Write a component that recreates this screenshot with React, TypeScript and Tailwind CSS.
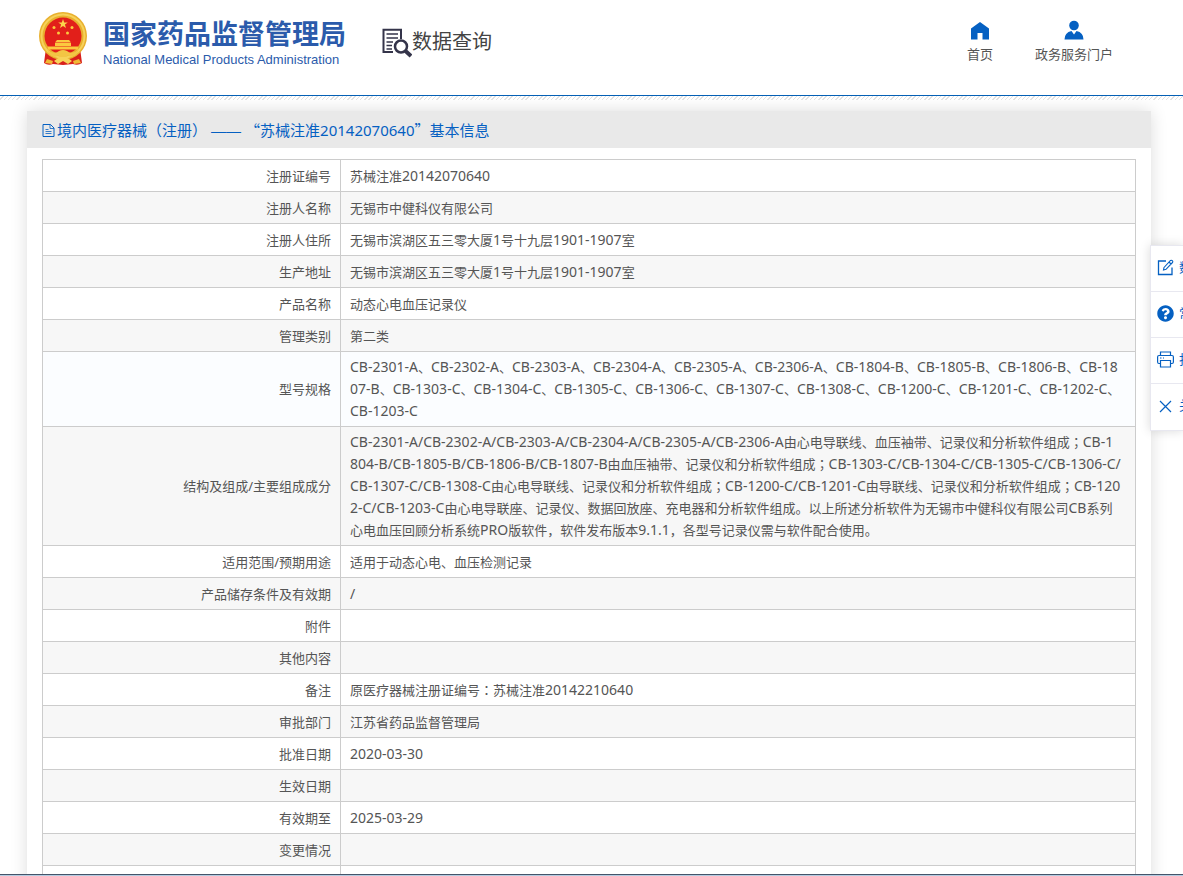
import React from "react";
import { FaQuestionCircle } from "react-icons/fa";

const rows = [
  { label: "注册证编号", value: ["苏械注准20142070640"] },
  { label: "注册人名称", value: ["无锡市中健科仪有限公司"] },
  { label: "注册人住所", value: ["无锡市滨湖区五三零大厦1号十九层1901-1907室"] },
  { label: "生产地址", value: ["无锡市滨湖区五三零大厦1号十九层1901-1907室"] },
  { label: "产品名称", value: ["动态心电血压记录仪"] },
  { label: "管理类别", value: ["第二类"] },
  {
    label: "型号规格",
    active: true,
    value: [
      "CB-2301-A、CB-2302-A、CB-2303-A、CB-2304-A、CB-2305-A、CB-2306-A、CB-1804-B、CB-1805-B、CB-1806-B、CB-18",
      "07-B、CB-1303-C、CB-1304-C、CB-1305-C、CB-1306-C、CB-1307-C、CB-1308-C、CB-1200-C、CB-1201-C、CB-1202-C、",
      "CB-1203-C",
    ],
  },
  {
    label: "结构及组成/主要组成成分",
    value: [
      "CB-2301-A/CB-2302-A/CB-2303-A/CB-2304-A/CB-2305-A/CB-2306-A由心电导联线、血压袖带、记录仪和分析软件组成；CB-1",
      "804-B/CB-1805-B/CB-1806-B/CB-1807-B由血压袖带、记录仪和分析软件组成；CB-1303-C/CB-1304-C/CB-1305-C/CB-1306-C/",
      "CB-1307-C/CB-1308-C由心电导联线、记录仪和分析软件组成；CB-1200-C/CB-1201-C由导联线、记录仪和分析软件组成；CB-120",
      "2-C/CB-1203-C由心电导联座、记录仪、数据回放座、充电器和分析软件组成。以上所述分析软件为无锡市中健科仪有限公司CB系列",
      "心电血压回顾分析系统PRO版软件，软件发布版本9.1.1，各型号记录仪需与软件配合使用。",
    ],
  },
  { label: "适用范围/预期用途", value: ["适用于动态心电、血压检测记录"] },
  { label: "产品储存条件及有效期", value: ["/"] },
  { label: "附件", value: [] },
  { label: "其他内容", value: [] },
  { label: "备注", value: ["原医疗器械注册证编号：苏械注准20142210640"] },
  { label: "审批部门", value: ["江苏省药品监督管理局"] },
  { label: "批准日期", value: ["2020-03-30"] },
  { label: "生效日期", value: [] },
  { label: "有效期至", value: ["2025-03-29"] },
  { label: "变更情况", value: [] },
  { label: "", value: [] },
];

// Latin runs are set a step larger than the Chinese, and ；： are centred in their cell
function MixedText({ text }: { text: string }) {
  return (
    <>
      {text.split(/([\x20-\x7e]+|[；：])/).map((part, i) => {
        if (/^[\x20-\x7e]/.test(part)) {
          return <span key={i} className="text-[14px]">{part}</span>;
        }
        if (/^[；：]/.test(part)) {
          return <span key={i} className="font-['Noto_Sans_CJK_TC',sans-serif]">{part}</span>;
        }
        return part;
      })}
    </>
  );
}

function Emblem() {
  return (
    <svg viewBox="0 0 48 54" className="h-[54px] w-12 shrink-0" aria-hidden="true">
      <path d="M7 36L5 51Q9 54 14 52L24 53L34 52Q39 54 43 51L41 36Z" fill="#d8201b" />
      <circle cx="24" cy="24" r="24" fill="#e9b02e" />
      <circle cx="24" cy="24" r="21.5" fill="none" stroke="#f6d25a" strokeWidth="2" />
      <circle cx="24" cy="24" r="18.5" fill="#e21f1a" />
      <path d="M24 7l1.2 3.4h3.6l-2.9 2.1 1.1 3.5-3-2.1-3 2.1 1.1-3.5-2.9-2.1h3.6z" fill="#fbd64b" />
      <g fill="#fbc93f">
        <circle cx="15" cy="15.5" r="1.5" />
        <circle cx="33" cy="15.5" r="1.5" />
        <circle cx="19.5" cy="21" r="1.5" />
        <circle cx="28.5" cy="21" r="1.5" />
        <path d="M18 28h12l2 2.500H16z" />
        <path d="M16 31h16v3H16zM9 34.500h30v3H9z" />
      </g>
      <path d="M8 38Q16 43 20 39Q24 37 28 39Q32 43 40 38L37 43Q32 46 29 43.500L24 46L19 43.500Q16 46 11 43Z" fill="#f3c544" />
      <path d="M15 49Q20 45 24 45Q28 45 33 49L29 52L24 49L19 52Z" fill="#f8d35a" />
      <path d="M8 47l6 2-1 3-7-1zM40 47l-6 2 1 3 7-1z" fill="#efb935" />
    </svg>
  );
}

function SearchDocIcon() {
  return (
    <svg viewBox="0 0 30 30" className="size-[30px] shrink-0" fill="none" stroke="#34344a" aria-hidden="true">
      <path d="M19 11V1.800H1.500V24H11" strokeWidth="2" />
      <path d="M4.500 6H16M4.500 10H16M4.500 14H11M4.500 17.500H10M4.500 21H10" strokeWidth="1.500" />
      <circle cx="19" cy="18.500" r="6" strokeWidth="2.500" />
      <path d="M23.500 23L29 28" strokeWidth="4" />
    </svg>
  );
}

function HomeIcon() {
  return (
    <svg viewBox="0 0 18 18" className="size-[18px]" fill="#0560c2" aria-hidden="true">
      <path d="M9 0L0 6.500V17.500H6.500V11H11.500V17.500H18V6.500Z" />
    </svg>
  );
}

function UserIcon() {
  return (
    <svg viewBox="0 0 20 20" className="size-5" fill="#0560c2" aria-hidden="true">
      <circle cx="10" cy="5.500" r="4.800" />
      <path d="M.5 19.500Q.5 12.500 7.500 11L10 14.500L12.500 11Q19.500 12.500 19.500 19.500Z" />
    </svg>
  );
}

function DocIcon() {
  return (
    <svg viewBox="0 0 13 14" className="h-3.5 w-[13px] shrink-0" fill="none" stroke="#0560c2" aria-hidden="true">
      <path d="M1 .5H8.500L12 4V12.500H1Z" />
      <path d="M8 .5V4.500H12M3.500 5.500H6.500M3.500 7.500H9.500M3.500 9.500H9.500" strokeWidth=".8" />
    </svg>
  );
}

function EditIcon() {
  return (
    <svg viewBox="0 0 17 17" className="size-[17px] shrink-0" fill="none" stroke="#0560c2" aria-hidden="true">
      <path d="M9 2H1.500V15.500H15V8.500" strokeWidth="1.300" />
      <path d="M7 8.500L13.500 1.500Q14.500.8 15.500 1.800Q16.200 2.800 15.500 3.500L9 10.300L6.500 11ZM12 3L14 5" strokeWidth="1.100" />
    </svg>
  );
}

function PrintIcon() {
  return (
    <svg viewBox="0 0 17 17" className="size-[17px] shrink-0" fill="none" stroke="#0560c2" strokeWidth="1.200" aria-hidden="true">
      <path d="M3.500 4.500V1H13.500V4.500M3.500 12.500H2Q.6 12.500.6 11V6Q.6 4.500 2 4.500H15Q16.400 4.500 16.400 6V11Q16.400 12.500 15 12.500H13.500" />
      <path d="M3.500 9.500H13.500V16H3.500ZM3 7H4.500M6 7H7" />
    </svg>
  );
}

function CloseIcon() {
  return (
    <svg viewBox="0 0 17 17" className="size-[17px] shrink-0" stroke="#0560c2" strokeWidth="1.200" aria-hidden="true">
      <path d="M3 3L14 14M14 3L3 14" />
    </svg>
  );
}

const tools = [
  { text: "数据纠错", icon: <EditIcon /> },
  { text: "常见问题", icon: <FaQuestionCircle className="size-[17px] shrink-0" /> },
  { text: "打印", icon: <PrintIcon /> },
  { text: "关闭", icon: <CloseIcon /> },
];

export default function App() {
  return (
    <div className="relative flex h-screen flex-col overflow-hidden bg-white font-['Noto_Sans','Noto_Sans_CJK_SC',sans-serif] text-[13px] text-[#555]">
      <header className="flex h-24 shrink-0 items-start justify-between border-b border-[#0560b5] pr-[70px] pl-[39px]">
        <div className="flex items-start">
          <a href="#" className="mt-3 flex items-start gap-4">
            <Emblem />
            <span className="flex flex-col whitespace-nowrap text-[#2b5bab]">
              <span className="mt-1 text-[27px] leading-[36px] font-bold">国家药品监督管理局</span>
              <span className="font-['Liberation_Sans',sans-serif] text-[13px] leading-4">
                National Medical Products Administration
              </span>
            </span>
          </a>
          <a href="#" className="mt-7 ml-9 flex items-start whitespace-nowrap text-[#444]">
            <SearchDocIcon />
            <span className="text-[20px] leading-7">数据查询</span>
          </a>
        </div>
        <nav className="mt-5 flex gap-[42px] whitespace-nowrap">
          <a href="#" className="flex flex-col items-center">
            <span className="flex h-[23px] items-start pt-0.5"><HomeIcon /></span>
            <span className="leading-[22px]">首页</span>
          </a>
          <a href="#" className="flex flex-col items-center">
            <span className="flex h-[23px] items-start"><UserIcon /></span>
            <span className="leading-[22px]">政务服务门户</span>
          </a>
        </nav>
      </header>
      <div className="h-1 shrink-0 bg-[repeating-linear-gradient(135deg,#fff_0px,#fff_2px,#e2e2e2_2px,#e2e2e2_3px)]" />

      <main className="min-h-0 flex-1 overflow-hidden pt-[11px] pr-8 pl-[27px]">
        <section className="bg-white shadow-[0_0_16px_rgba(0,0,0,0.14)]">
          <h1 className="flex h-[37px] items-center bg-[#e9e9e9] pt-0.5 pr-4 pl-[15px] text-[15px] whitespace-nowrap text-[#0560c2]">
            <DocIcon />
            <span className="pl-0.5">
              境内医疗器械（注册） <span className="font-['Liberation_Sans',sans-serif]">—— </span>
              <span className="font-['Noto_Sans_CJK_SC',sans-serif]">“</span>
              苏械注准20142070640
              <span className="font-['Noto_Sans_CJK_SC',sans-serif]">”</span>基本信息
            </span>
          </h1>
          <div className="px-[15px] pt-[11px] pb-10">
            <table className="w-full table-fixed border-collapse">
              <tbody>
                {rows.map((row, i) => (
                  <tr
                    key={i}
                    className={`h-8 ${row.active ? "bg-[#fbfdff]" : i % 2 ? "bg-[#f7f7f7]" : "bg-white"}`}
                  >
                    <th
                      scope="row"
                      className="w-[298px] border border-[#ccc] px-[9px] py-1 text-right leading-[22px] font-normal"
                    >
                      {row.label}
                    </th>
                    <td className="border border-[#ccc] px-[9px] py-1 leading-[22px] whitespace-nowrap">
                      {row.value.map((line, n) => (
                        <React.Fragment key={n}>
                          {n > 0 && <br />}
                          <MixedText text={line} />
                        </React.Fragment>
                      ))}
                    </td>
                  </tr>
                ))}
              </tbody>
            </table>
          </div>
        </section>
      </main>

      {/* Side tools, partly off the right edge */}
      <aside className="absolute top-[245px] right-0 w-[33px] overflow-hidden border border-r-0 border-[#e8e8f0] bg-white text-[#0560c2] shadow-[0_0_10px_rgba(0,0,0,0.15)]">
        {tools.map((tool) => (
          <button
            key={tool.text}
            type="button"
            className="flex h-[46px] w-28 items-center gap-[5px] border-b border-[#e8e8f0] pb-0.5 pl-1.5 text-left whitespace-nowrap last:border-b-0"
          >
            {tool.icon}
            <span>{tool.text}</span>
          </button>
        ))}
      </aside>

      <div className="h-0.5 shrink-0 border-t border-[#44546a] bg-[#b4cbe0]" />
    </div>
  );
}
